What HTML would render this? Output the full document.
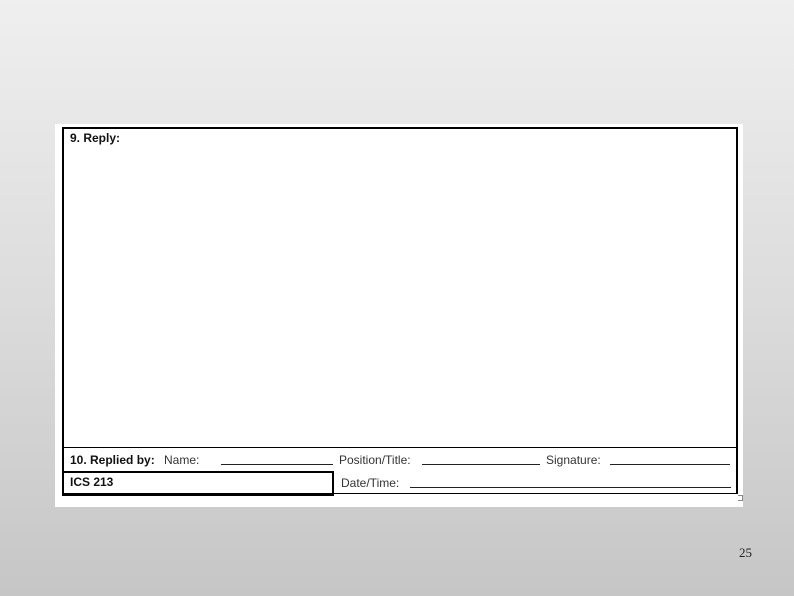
<!DOCTYPE html>
<html><head><style>
body{margin:0;width:794px;height:596px;overflow:hidden;background:linear-gradient(#efefef,#dcdcdc 50%,#c6c6c6);position:relative;font-family:"Liberation Sans",sans-serif}
.a{position:absolute}
.t{font-size:12px;color:#111;position:absolute;white-space:nowrap}
.u{position:absolute;height:1px;background:#222}
</style></head><body>
<div class="a" style="left:55px;top:124px;width:688px;height:383px;background:#fff"></div>
<div class="a" style="left:62px;top:127px;width:2px;height:367px;background:#000"></div>
<div class="a" style="left:62px;top:127px;width:676px;height:2px;background:#000"></div>
<div class="a" style="left:736px;top:127px;width:2px;height:367px;background:#000"></div>
<div class="a" style="left:62px;top:447px;width:676px;height:1px;background:#000"></div>
<div class="a" style="left:62px;top:493px;width:676px;height:1px;background:#000"></div>
<div class="a" style="left:62px;top:471px;width:270px;height:21px;border:2px solid #000;border-left:none"></div>
<div class="t" style="left:70px;top:131px;font-weight:bold">9. Reply:</div>
<div class="t" style="left:70px;top:453px;font-weight:bold">10. Replied by:</div>
<div class="t" style="left:164px;top:453px;color:#333">Name:</div>
<div class="u" style="left:221px;top:464px;width:112px"></div>
<div class="t" style="left:339px;top:453px;color:#333">Position/Title:</div>
<div class="u" style="left:422px;top:464px;width:118px"></div>
<div class="t" style="left:546px;top:453px;color:#333">Signature:</div>
<div class="u" style="left:610px;top:464px;width:120px"></div>
<div class="t" style="left:70px;top:475px;font-weight:bold">ICS 213</div>
<div class="t" style="left:341px;top:476px;color:#333">Date/Time:</div>
<div class="u" style="left:410px;top:487px;width:321px"></div>
<div class="a" style="left:738px;top:495px;width:4px;height:4px;border:1px solid #888;border-left:none"></div>
<div class="a" style="left:739px;top:545px;font-family:'Liberation Serif',serif;font-size:13px;color:#222">25</div>
</body></html>
